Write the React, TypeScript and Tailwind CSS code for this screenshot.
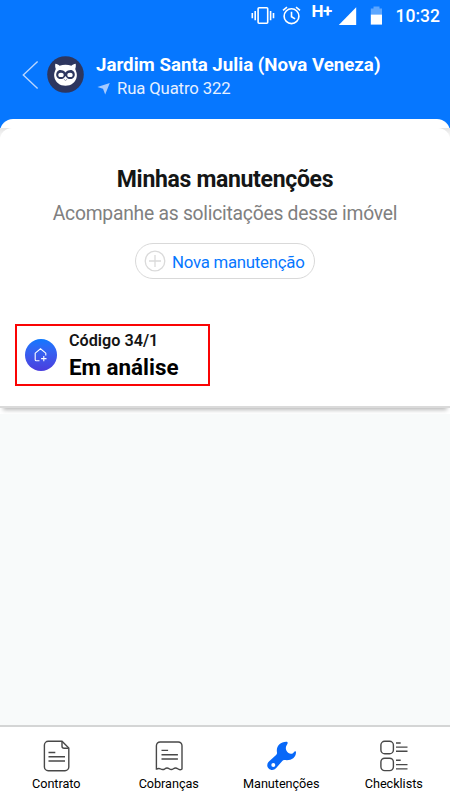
const StatusBar = () => (
  <div className="flex h-[31px] shrink-0 items-center justify-end pr-[10px] text-white">
    <svg width="24" height="20" viewBox="0 0 24 20" fill="none" stroke="currentColor" strokeWidth="1.6">
      <rect x="7.1" y="1.8" width="9.6" height="15.4" rx="1" />
      <path d="M4.2 5v9.2M1.3 7v5.2M19.6 5v9.2M22.5 7v5.2" />
    </svg>
    <svg className="ml-[6px]" width="20" height="20" viewBox="0 0 20 20" fill="none" stroke="currentColor" strokeWidth="1.6">
      <circle cx="10.5" cy="10.2" r="7.4" />
      <path d="M10.5 5.7v5l3.6 2.2M2 4.4l4-3.3M19 4.4l-4-3.3" />
    </svg>
    <span className="ml-[11px] -mt-[10px] w-[21px] text-[17px] leading-[20px] font-bold tracking-[-0.5px]">H+</span>
    <svg className="ml-[5px]" width="19" height="20" viewBox="0 0 19 20" fill="currentColor">
      <path d="M18.2 1.3V19H.8z" />
    </svg>
    <svg className="ml-[13px]" width="13" height="20" viewBox="0 0 13 20" fill="currentColor">
      <path opacity=".35" d="M3.5.5h6v2H12v6H.8v-6h2.7z" />
      <path d="M.8 8.5H12v10.1H.8z" />
    </svg>
    <span className="ml-[13px] text-[17.5px] leading-[20px] font-medium">10:32</span>
  </div>
);

const OwlLogo = () => (
  <svg width="37" height="37" viewBox="0 0 37 37">
    <circle cx="18.5" cy="18.5" r="18.3" fill="#2d365f" />
    <path fill="#fff" d="M8.3 7.7c1.8.2 3.2 1 4.3 2.1 3.8-1.3 8-1.3 11.8 0 1.1-1.1 2.5-1.9 4.3-2.1.3 2 .1 3.7-.5 5.4.9 2.3 2 4.7 1.6 7.2-.8 6.2-5.8 9.5-11.3 9.5S8 26.500 7.200 20.300c-.4-2.500.700-4.900 1.600-7.200-.6-1.700-.8-3.400-.5-5.400z" />
    <path fill="#2d365f" d="M10.1 15.7c1.7-2.5 5.8-2 8.4.7 2.6-2.7 6.7-3.2 8.4-.7 2.4 3.7-.3 7.5-3.7 7.4-2.1 0-3.5-1.3-4.7-3.2-1.2 1.9-2.6 3.2-4.7 3.2-3.4.1-6.1-3.7-3.7-7.4z" />
    <ellipse cx="14" cy="18.9" rx="2.7" ry="2.2" fill="#fff" />
    <ellipse cx="23" cy="18.9" rx="2.7" ry="2.2" fill="#fff" />
    <path d="m16.7 22.6 1.8 2.2 1.8-2.2" fill="#fff" stroke="#8c91aa" strokeWidth=".8" />
  </svg>
);

const Header = () => (
  <div className="flex h-[88px] shrink-0 items-start pl-[22px] text-white">
    <svg className="mt-[29px]" width="17" height="30" viewBox="0 0 17 30" fill="none" stroke="#b9d6ff" strokeWidth="1.4">
      <path d="M15.6 1.4 1.3 15l14.3 13.4" />
    </svg>
    <div className="mt-[25px] ml-[8px]">
      <OwlLogo />
    </div>
    <div className="mt-[22px] ml-[12px]">
      <h1 className="text-[18.7px] leading-[24px] font-bold whitespace-nowrap">Jardim Santa Julia (Nova Veneza)</h1>
      <div className="flex items-center text-[#e6f0ff]">
        <svg className="ml-[1px]" width="13" height="13" viewBox="0 0 13 13" fill="#a5caff">
          <path d="M12.8 0 8.2 11.4 6 5.8.4 4.1z" />
        </svg>
        <span className="ml-[7px] text-[16.7px] leading-[24px] tracking-[-0.12px]">Rua Quatro 322</span>
      </div>
    </div>
  </div>
);

const ContratoIcon = () => (
  <svg width="28" height="32" viewBox="0 0 28 32" fill="none" stroke="#484848" strokeWidth="1.4">
    <path d="M20 1.3H6.2A3.8 3.8 0 0 0 2.4 5v22a3.8 3.8 0 0 0 3.8 3.7H23a3.8 3.8 0 0 0 3.8-3.7V8z" />
    <path d="M20 1.5v4.8c0 1.4.8 1.9 2.2 1.9h4.4" />
    <path d="M6.5 12.5h6.8M6.5 16.8H23M6.5 21H23" />
  </svg>
);

const CobrancasIcon = () => (
  <svg width="28" height="32" viewBox="0 0 28 32" fill="none" stroke="#484848" strokeWidth="1.4">
    <path d="M1.4 29V5.7A3.7 3.7 0 0 1 5.1 2h18.2a3.7 3.7 0 0 1 3.7 3.7V29c-1.7 1.2-3 .8-4.3-.2-1.6-1.2-2.7-1.2-4.3 0-1.5 1.1-2.7 1.1-4.2 0-1.6-1.2-2.8-1.2-4.3 0-1.6 1.1-2.7 1.1-4.2.2-1.3-.8-2.4-.8-4.1 0z" />
    <path d="M6.5 10.4h6.6M6.5 14.7h16.4M6.5 19h16.4" />
  </svg>
);

const ManutencoesIcon = () => (
  <svg width="30" height="32" viewBox="0 0 30 32">
    <path
      fill="#0868f8"
      fillRule="evenodd"
      d="M20.4 1.8c-6.2-.1-10.6 4.5-9.4 10.8.2 1-.2 1.700-.9 2.300l-6.900 6.300c-2.400 2.200-2.600 5.300-.5 7.400 2.200 2.200 5.500 1.900 7.500-.5l6.100-7.200c.7-.8 1.400-1.100 2.400-.9 6.200.9 11.100-2.300 11.300-7.600 0-1.200-1.300-1.400-1.900-.5-1.400 2.100-3.700 2.500-5.600 1.100-2.800-2-3.700-5.600-1.300-8.800.9-1.300.5-2.300-.8-2.400zM7.300 22.900a2 2 0 1 1 0 4 2 2 0 0 1 0-4z"
    />
  </svg>
);

const ChecklistsIcon = () => (
  <svg width="28" height="32" viewBox="0 0 28 32" fill="none" stroke="#484848" strokeWidth="1.4">
    <rect x=".9" y="1.3" width="12.5" height="12.4" rx="3.8" />
    <rect x=".9" y="18.2" width="12.5" height="12.4" rx="3.8" />
    <path d="M16 3h4.7M16 7.1h11.5M16 11.3h11.5M16 20.3h4.7M16 24.6h11.5M16 28.9h11.5" />
  </svg>
);

const tabs = [
  { label: "Contrato", icon: <ContratoIcon /> },
  { label: "Cobranças", icon: <CobrancasIcon /> },
  { label: "Manutenções", icon: <ManutencoesIcon /> },
  { label: "Checklists", icon: <ChecklistsIcon /> },
];

const App = () => {
  return (
    <div className="flex h-[800px] w-[450px] flex-col overflow-hidden bg-[#0677ff] font-[Roboto,sans-serif]">
      <StatusBar />
      <Header />

      <main className="flex flex-1 flex-col rounded-t-[13px] bg-white pt-[9px]">
        <div className="bg-linear-to-b from-[#e4e4e4] to-white to-[12px]">
          <section className="flex h-[280px] flex-col rounded-t-[12px] border-b-2 border-[#dadada] bg-white shadow-[0_5px_4px_-3px_rgba(0,0,0,0.28)]">
            <div className="flex flex-col items-center">
              <h2 className="mt-[38px] text-[23px] leading-[28px] font-bold tracking-[-0.32px] text-[#141616]">Minhas manutenções</h2>
              <p className="mt-[8px] text-[19.3px] leading-[24px] tracking-[-0.25px] text-[#808080]">Acompanhe as solicitações desse imóvel</p>
              <button className="mt-[17px] flex h-[36px] w-[180px] items-center rounded-full border-[1.5px] border-[#d9d9d9] pl-[8px] text-[#0677ff]">
                <svg width="22" height="22" viewBox="0 0 22 22" fill="none" stroke="#dadada" strokeWidth="1.3">
                  <circle cx="11" cy="11" r="9.8" />
                  <path d="M11 5v12M5 11h12" />
                </svg>
                <span className="mt-[2px] ml-[6px] text-[16.8px] leading-[20px] tracking-[-0.25px] whitespace-nowrap">Nova manutenção</span>
              </button>
            </div>

            <div className="mt-[45px] ml-[15px] flex h-[62px] w-[195px] items-center border-2 border-[#fa0404] pl-[8px]">
              <div className="flex h-[32px] w-[32px] items-center justify-center rounded-full bg-linear-to-b from-[#0878ff] to-[#493cdd]">
                <svg width="14" height="14" viewBox="0 0 14 14" fill="none" stroke="#fff" strokeWidth="1.1">
                  <path d="M5.5 12.8H2.3a1.1 1.1 0 0 1-1.1-1.1V5.2L6.500.8l5.300 4.400v2.200M9.800 7.900v5.400M7.100 10.600h5.400" />
                </svg>
              </div>
              <div className="mt-[1px] ml-[12px]">
                <p className="text-[16.2px] leading-[24px] font-semibold text-[#141414]">Código 34/1</p>
                <p className="text-[22.4px] leading-[29px] font-bold text-black">Em análise</p>
              </div>
            </div>
          </section>
        </div>
        <div className="mt-[6px] flex-1 bg-[#f8fafa]" />
      </main>

      <nav className="flex h-[75px] shrink-0 border-t-2 border-[#d4d5d5] bg-white">
        {tabs.map((tab) => (
          <div key={tab.label} className="flex flex-1 flex-col items-center pt-[13px]">
            {tab.icon}
            <span className="mt-[3px] text-[12.7px] leading-[18px] tracking-[-0.05px] text-black">{tab.label}</span>
          </div>
        ))}
      </nav>
    </div>
  );
};

export default App;
